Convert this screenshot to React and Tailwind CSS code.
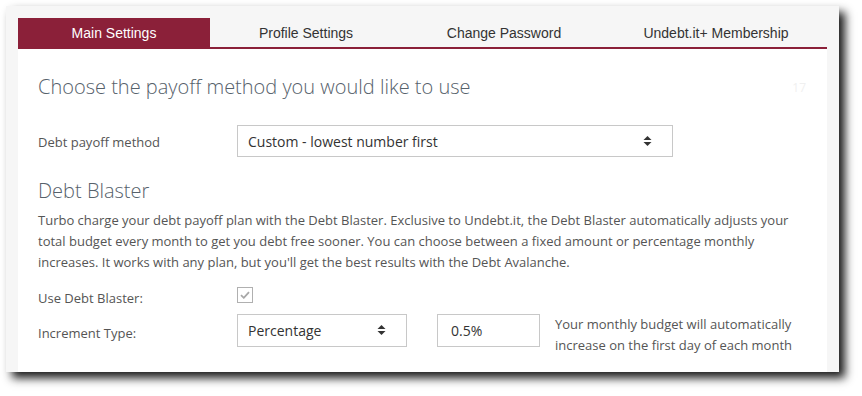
import React from "react";

const tabs = [
  { label: "Main Settings", w: "w-[192px]", active: true },
  { label: "Profile Settings", w: "w-[192px]" },
  { label: "Change Password", w: "w-[204px]" },
  { label: "Undebt.it+ Membership", w: "w-[220px]" },
];

const SelectArrows = () => (
  <svg width="9" height="12" viewBox="0 0 9 12" className="text-[#333]">
    <path d="M0.5 5 L4.5 1 L8.5 5 Z" fill="currentColor" />
    <path d="M0.5 7 L4.5 11 L8.5 7 Z" fill="currentColor" />
  </svg>
);

export default function App() {
  return (
    <div
      className="w-[862px] h-[396px] bg-white pt-[6px] pl-[6px]"
      style={{ fontFamily: "'Open Sans', 'Liberation Sans', sans-serif" }}
    >
      <div className="w-[833px] h-[366px] bg-[#f6f6f6] px-[12px] pt-[12px] flex flex-col shadow-[6px_6px_9px_rgba(0,0,0,0.9)]">
        {/* TABS */}
        <div
          className="flex h-[31px] border-b-2 border-[#8b2039]"
          style={{ fontFamily: "'Liberation Sans', Arial, sans-serif" }}
        >
          {tabs.map((t) => (
            <div
              key={t.label}
              className={`${t.w} flex items-center justify-center pt-[2px] text-[14px] ${
                t.active ? "bg-[#8b2039] text-white" : "text-[#333]"
              }`}
            >
              {t.label}
            </div>
          ))}
        </div>

        {/* CONTENT */}
        <div className="flex-1 bg-white px-[20px] pt-[24px] relative">
          <span className="absolute right-[21px] top-[30px] text-[12px] text-[#f0f0f0]">
            17
          </span>
          <h2 className="text-[20px] leading-[28px] font-light text-[#56616b]">
            Choose the payoff method you would like to use
          </h2>

          <div className="flex items-center mt-[24px]">
            <label className="w-[199px] text-[13px] text-[#555] pt-[4px]">
              Debt payoff method
            </label>
            <div className="w-[436px] h-[32px] border border-[#c8c8c8] flex items-center justify-between pl-[10px] pr-[20px] text-[14px] text-[#333]">
              <span>Custom - lowest number first</span>
              <SelectArrows />
            </div>
          </div>

          <h3 className="mt-[20px] text-[20px] leading-[28px] font-light text-[#56616b]">
            Debt Blaster
          </h3>
          <p className="mt-[5px] text-[13px] leading-[21px] text-[#555]">
            Turbo charge your debt payoff plan with the Debt Blaster. Exclusive to Undebt.it, the Debt Blaster automatically adjusts your total budget every month to get you debt free sooner. You can choose between a fixed amount or percentage monthly increases. It works with any plan, but you'll get the best results with the Debt Avalanche.
          </p>

          <div className="flex items-start mt-[14px]">
            <label className="w-[199px] text-[13px] text-[#555] pt-[2px]">
              Use Debt Blaster:
            </label>
            <div className="w-[16px] h-[16px] border border-[#b0b0b0] flex items-center justify-center">
              <svg width="10" height="8" viewBox="0 0 10 8">
                <path
                  d="M1 4.2 L3.8 6.8 L9 1.2"
                  stroke="#a8a8a8"
                  strokeWidth="1.8"
                  fill="none"
                />
              </svg>
            </div>
          </div>

          <div className="flex items-start mt-[5px]">
            <label className="w-[199px] text-[13px] text-[#555] pt-[10px]">
              Increment Type:
            </label>
            <div className="w-[170px] h-[33px] border border-[#c8c8c8] flex items-center justify-between pl-[10px] pr-[20px] text-[14px] text-[#333]">
              <span>Percentage</span>
              <SelectArrows />
            </div>
            <div className="ml-[30px] w-[103px] h-[33px] border border-[#c8c8c8] flex items-center pl-[13px] text-[14px] text-[#333]">
              0.5%
            </div>
            <p className="ml-[15px] text-[13px] leading-[21px] text-[#555]">
              Your monthly budget will automatically
              <br />
              increase on the first day of each month
            </p>
          </div>
        </div>
      </div>
    </div>
  );
}
